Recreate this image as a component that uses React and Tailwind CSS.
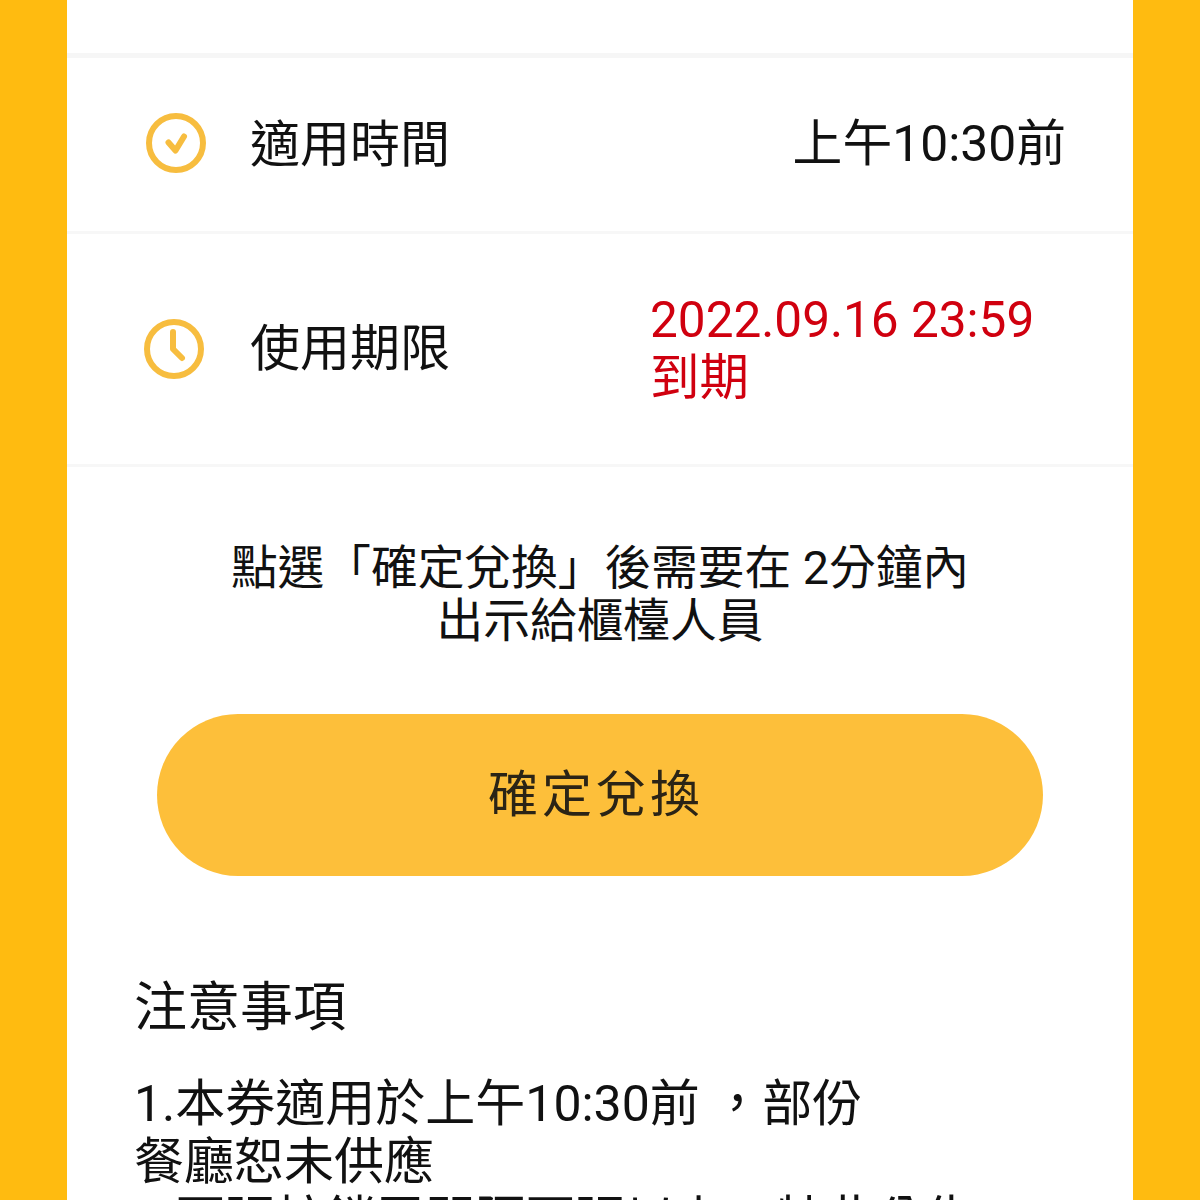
const font = { fontFamily: '"Roboto", "Noto Sans CJK TC", sans-serif' };

const CheckIcon = () => (
    <svg width="60" height="60" viewBox="0 0 60 60" fill="none" stroke="#f7bd3f" strokeLinecap="round" strokeLinejoin="round" className="-mt-[3px]">
        <circle cx="30" cy="30" r="27" strokeWidth="6" />
        <path d="M22.5 29.5l7 8 8.500-14" strokeWidth="6" />
    </svg>
);

const ClockIcon = () => (
    <svg width="60" height="60" viewBox="0 0 60 60" fill="none" stroke="#f7bd3f" strokeLinecap="round" strokeLinejoin="round">
        <circle cx="30" cy="30" r="27" strokeWidth="6" />
        <path d="M29 13v17l9 9" strokeWidth="6" />
    </svg>
);

export default function App() {
    return (
        <div className="w-[1200px] h-[1200px] overflow-hidden bg-[#ffbb10] px-[67px] text-[#111]" style={font}>
            <div className="w-[1066px] h-[1200px] bg-white overflow-hidden">
                <div className="h-[53px]" />
                <div className="h-[5px] bg-[#f6f6f6]" />

                {/* Rows */}
                <div className="h-[176px] flex items-center border-b-[3px] border-[#f7f7f7] pl-[79px] pr-[67px]">
                    <CheckIcon />
                    <span className="ml-[44px] text-[50px] leading-none">適用時間</span>
                    <span className="ml-auto text-[49.800px] leading-none">上午10:30前</span>
                </div>
                <div className="h-[233px] flex items-center border-b-[3px] border-[#f7f7f7] pl-[77px]">
                    <ClockIcon />
                    <span className="ml-[46px] text-[50px] leading-none">使用期限</span>
                    <div className="ml-[200px] text-[49.500px] leading-[58px] text-[#d0000f]">
                        <div>2022.09.16 23:59</div>
                        <div>到期</div>
                    </div>
                </div>

                <div className="mt-[75px] text-center text-[46.700px] leading-[53px]">
                    <div>點選「確定兌換」後需要在 2分鐘內</div>
                    <div>出示給櫃檯人員</div>
                </div>

                <div className="mt-[66px] mx-[90px] h-[162px] rounded-full bg-[#fdbf3a] flex items-center justify-center pr-[8px] text-[50px] tracking-[4px] text-[#2b2416]">
                    確定兌換
                </div>

                <div className="mt-[100px] pl-[67px]">
                    <div className="text-[53px] leading-[64px]">注意事項</div>
                    <div className="mt-[35px] text-[50px] leading-[58px]">
                        <div>1.本券適用於上午10:30前 ，部份</div>
                        <div>餐廳恕未供應</div>
                        <div>2.兩張核銷需間隔兩張以上，特此公告</div>
                    </div>
                </div>
            </div>
        </div>
    );
}
